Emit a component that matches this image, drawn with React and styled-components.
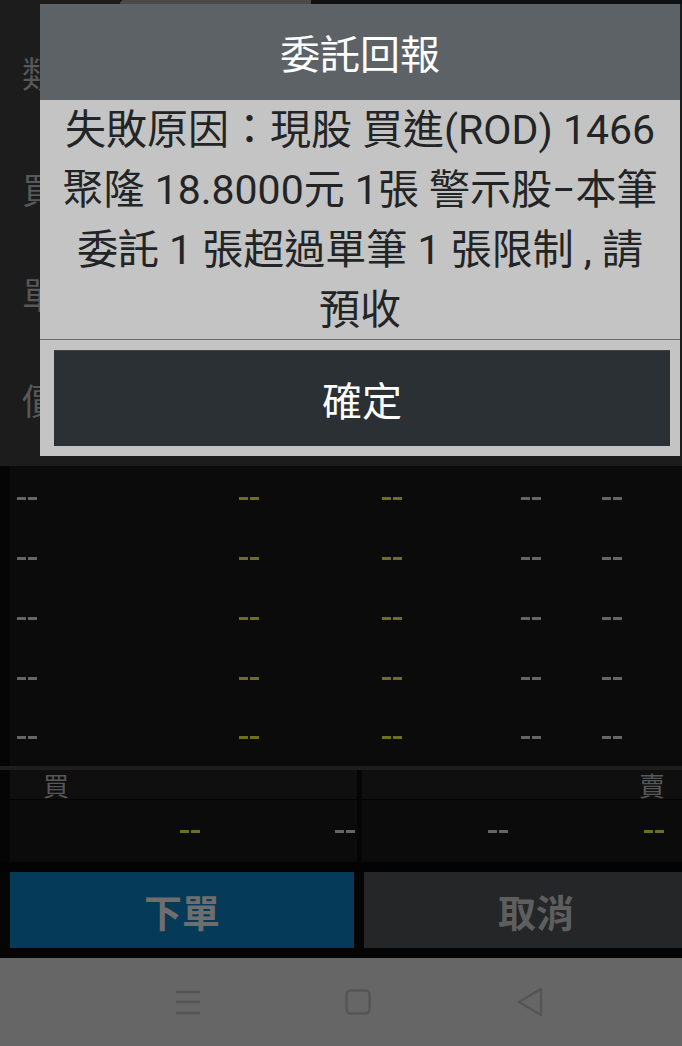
import React from "react";
import styled, { createGlobalStyle } from "styled-components";

const GlobalStyle = createGlobalStyle`
  html, body {
    margin: 0;
    padding: 0;
    background: #050505;
  }
  body {
    font-family: Roboto, "Noto Sans CJK TC", "Noto Sans", sans-serif;
  }
`;

const Screen = styled.div`
  position: relative;
  width: 682px;
  height: 1046px;
  display: flex;
  flex-direction: column;
  background: #050505;
  overflow: hidden;
`;

const TopStrip = styled.div`
  height: 4px;
  display: flex;
  background: #0f1012;

  & span.left {
    width: 120px;
    background: #1c1c1c;
  }
  & span.tab {
    width: 191px;
    background: #4a4a4a;
    border-top-left-radius: 4px;
  }
`;

const FormArea = styled.div`
  height: 462px;
  background: #1c1c1c;
  padding: 50px 0 0 22px;
  box-sizing: border-box;
  display: grid;
  grid-template-rows: 116px 105px 106px auto;
`;

const FormLabel = styled.div`
  font-size: 36px;
  line-height: 36px;
  color: #585858;
  font-family: "Noto Sans CJK TC", sans-serif;
`;

const QuoteTable = styled.div`
  height: 300px;
  margin-left: 10px;
  padding: 2px 0 0 7px;
  box-sizing: border-box;
  background: #0b0b0b;
  display: grid;
  grid-template-columns: 222px 143px 139px 81px 1fr;
  grid-template-rows: repeat(4, 60px) 58px;
  align-items: center;
  overflow: hidden;
`;

const Dash = styled.span`
  display: inline-flex;
  gap: 2px;
  width: 20px;
  height: 3px;
  flex-shrink: 0;

  &::before,
  &::after {
    content: "";
    flex: 1;
    background: ${(p) => (p.$tone === "yellow" ? "#6e6e1e" : "#656565")};
  }
`;

const Band = styled.div`
  height: 4px;
  background: #1e1e1e;
`;

const BookArea = styled.div`
  height: 92px;
  display: flex;
  gap: 5px;
  padding-left: 10px;
`;

const BookPanel = styled.div`
  width: ${(p) => p.$width}px;
  flex-shrink: 0;
  display: flex;
  flex-direction: column;
`;

const BookHeader = styled.div`
  height: 29px;
  border-bottom: 1px solid #030303;
  background: #0f0f0f;
  display: flex;
  justify-content: ${(p) => (p.$align === "right" ? "flex-end" : "flex-start")};
  padding: 0 17px 0 33px;
  font-family: "Noto Sans CJK TC", sans-serif;
  font-size: 26px;
  line-height: 30px;
  color: #575757;
`;

const BookBody = styled.div`
  flex: 1;
  background: #0b0b0b;
  display: flex;
  align-items: center;
  padding: 0 ${(p) => p.$right}px 0 ${(p) => p.$left}px;

  & > span:last-child {
    margin-left: auto;
  }
`;

const Gap = styled.div`
  height: 10px;
  background: #030303;
`;

const ButtonRow = styled.div`
  height: 76px;
  display: flex;
  gap: 10px;
  padding-left: 10px;
`;

const ActionButton = styled.div`
  width: 344px;
  flex-shrink: 0;
  display: flex;
  align-items: center;
  justify-content: center;
  background: ${(p) => (p.$primary ? "#053a58" : "#242628")};
  color: ${(p) => (p.$primary ? "#6e6e6e" : "#5e5e5e")};
  font-family: "Noto Sans CJK TC", sans-serif;
  font-weight: 700;
  font-size: 38px;
`;

const NavBar = styled.div`
  height: 88px;
  margin-top: 10px;
  background: #666666;
  display: flex;
  align-items: center;
  gap: 144px;
  padding-left: 175px;

  & svg {
    flex-shrink: 0;
  }
`;

const Dialog = styled.div`
  position: absolute;
  left: 40px;
  top: 4px;
  width: 640px;
  background: #c4c4c4;
  display: flex;
  flex-direction: column;
`;

const DialogTitle = styled.div`
  height: 96px;
  background: #5d6266;
  color: #ffffff;
  font-size: 40px;
  display: flex;
  align-items: center;
  justify-content: center;
  font-family: "Noto Sans CJK TC", sans-serif;
`;

const DialogMessage = styled.div`
  height: 239px;
  border-bottom: 1px solid #6c6c6c;
  color: #222426;
  font-size: 41px;
  line-height: 60px;
  text-align: center;
  white-space: nowrap;

  & span {
    display: block;
  }
`;

const DialogFooter = styled.div`
  padding: 10px 10px 10px 14px;
`;

const ConfirmButton = styled.div`
  height: 95px;
  border-top: 1px solid #3e4347;
  background: #2b3035;
  color: #ffffff;
  font-size: 40px;
  display: flex;
  align-items: center;
  justify-content: center;
  font-family: "Noto Sans CJK TC", sans-serif;
`;

const NavIcon = ({ kind }) => {
  const stroke = "#555555";
  if (kind === "menu") {
    return (
      <svg width="26" height="26" viewBox="0 0 26 26">
        <path d="M1 3h24M1 13h24M1 24h24" stroke={stroke} strokeWidth="2.4" fill="none" />
      </svg>
    );
  }
  if (kind === "home") {
    return (
      <svg width="26" height="26" viewBox="0 0 26 26">
        <rect x="1.5" y="1.5" width="23" height="23" rx="4" stroke={stroke} strokeWidth="2.4" fill="none" />
      </svg>
    );
  }
  return (
    <svg width="30" height="30" viewBox="0 0 30 30">
      <path d="M26 2 L4 15 L26 28 Z" stroke={stroke} strokeWidth="2.4" strokeLinejoin="round" fill="none" />
    </svg>
  );
};

const quoteRows = [0, 1, 2, 3, 4];
const quoteTones = ["gray", "yellow", "yellow", "gray", "gray"];

export default function App() {
  return (
    <>
      <GlobalStyle />
      <Screen>
        <TopStrip>
          <span className="left" />
          <span className="tab" />
        </TopStrip>

        <FormArea>
          <FormLabel>類</FormLabel>
          <FormLabel>買</FormLabel>
          <FormLabel>單</FormLabel>
          <FormLabel>價</FormLabel>
        </FormArea>

        <QuoteTable>
          {quoteRows.map((r) =>
            quoteTones.map((tone, i) => <Dash key={`${r}-${i}`} $tone={tone} />)
          )}
        </QuoteTable>

        <Band />

        <BookArea>
          <BookPanel $width={347}>
            <BookHeader>買</BookHeader>
            <BookBody $left={170} $right={2}>
              <Dash $tone="yellow" />
              <Dash $tone="gray" />
            </BookBody>
          </BookPanel>
          <BookPanel $width={320}>
            <BookHeader $align="right">賣</BookHeader>
            <BookBody $left={126} $right={18}>
              <Dash $tone="gray" />
              <Dash $tone="yellow" />
            </BookBody>
          </BookPanel>
        </BookArea>

        <Gap />

        <ButtonRow>
          <ActionButton $primary>下單</ActionButton>
          <ActionButton>取消</ActionButton>
        </ButtonRow>

        <NavBar>
          <NavIcon kind="menu" />
          <NavIcon kind="home" />
          <NavIcon kind="back" />
        </NavBar>

        <Dialog>
          <DialogTitle>委託回報</DialogTitle>
          <DialogMessage>
            <span>失敗原因：現股 買進(ROD) 1466</span>
            <span>聚隆 18.8000元 1張 警示股−本筆</span>
            <span>委託 1 張超過單筆 1 張限制 , 請</span>
            <span>預收</span>
          </DialogMessage>
          <DialogFooter>
            <ConfirmButton>確定</ConfirmButton>
          </DialogFooter>
        </Dialog>
      </Screen>
    </>
  );
}
